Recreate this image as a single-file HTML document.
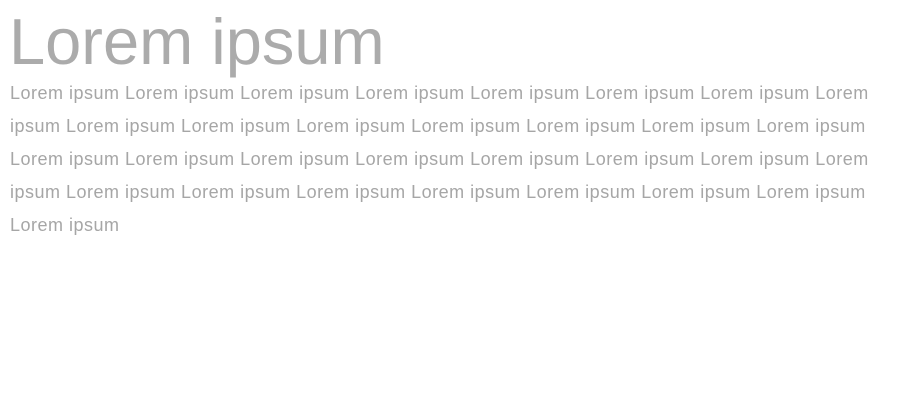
<!DOCTYPE html>
<html><head><meta charset="utf-8"><style>
html,body{margin:0;padding:0;background:#fff;width:900px;height:400px;overflow:hidden}
body{font-family:"Liberation Sans",Arial,sans-serif}
h1{position:absolute;left:9px;top:9px;margin:0;font-weight:normal;font-size:65px;line-height:65px;color:#ababab;letter-spacing:0}
p{position:absolute;left:10px;top:77px;margin:0;font-size:18px;line-height:33px;color:#a6a6a6;letter-spacing:0.5px;white-space:nowrap}
</style></head><body>
<h1>Lorem ipsum</h1>
<p>Lorem ipsum Lorem ipsum Lorem ipsum Lorem ipsum Lorem ipsum Lorem ipsum Lorem ipsum Lorem<br>
ipsum Lorem ipsum Lorem ipsum Lorem ipsum Lorem ipsum Lorem ipsum Lorem ipsum Lorem ipsum<br>
Lorem ipsum Lorem ipsum Lorem ipsum Lorem ipsum Lorem ipsum Lorem ipsum Lorem ipsum Lorem<br>
ipsum Lorem ipsum Lorem ipsum Lorem ipsum Lorem ipsum Lorem ipsum Lorem ipsum Lorem ipsum<br>
Lorem ipsum</p>
</body></html>
